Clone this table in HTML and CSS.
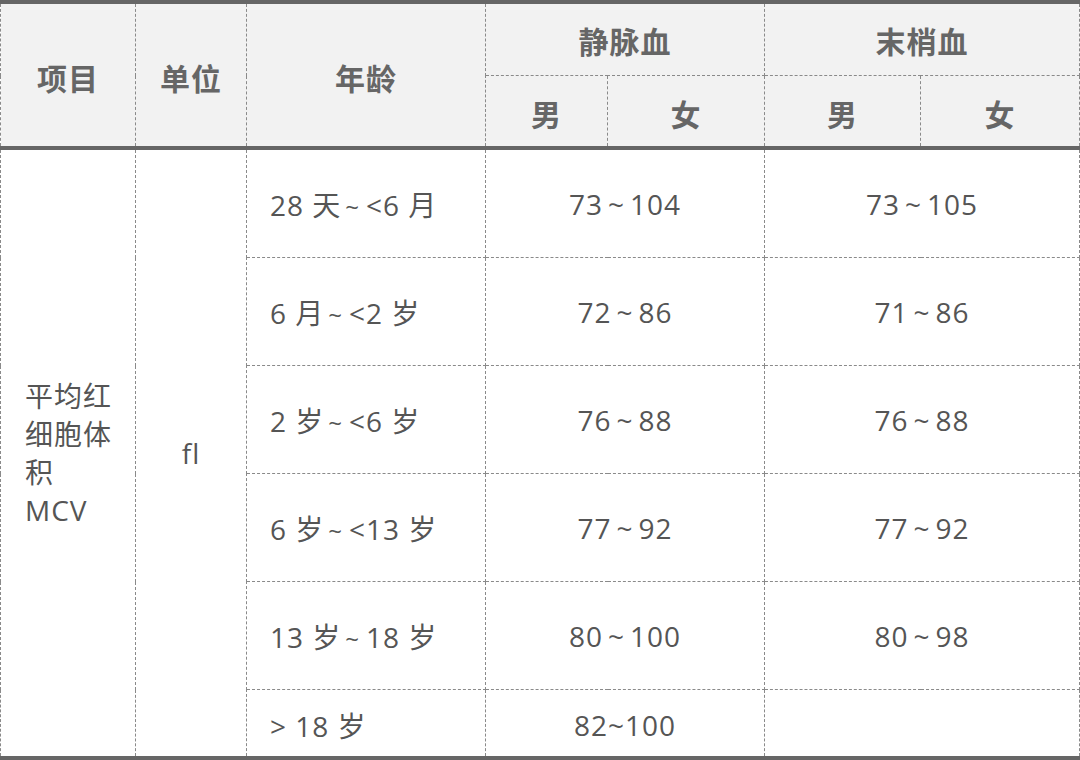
FILE: index.html
```html
<!DOCTYPE html>
<html lang="zh">
<head>
<meta charset="utf-8">
<title>MCV 参考区间</title>
<link rel="stylesheet" href="styles.css">
</head>
<body>
<table class="ref">
  <colgroup>
    <col class="c-item"><col class="c-unit"><col class="c-age">
    <col class="c-vm"><col class="c-vf"><col class="c-pm"><col class="c-pf">
  </colgroup>
  <thead>
    <tr class="h1">
      <th rowspan="2">项目</th>
      <th rowspan="2">单位</th>
      <th rowspan="2">年龄</th>
      <th colspan="2">静脉血</th>
      <th colspan="2">末梢血</th>
    </tr>
    <tr class="h2">
      <th>男</th><th>女</th><th>男</th><th>女</th>
    </tr>
  </thead>
  <tbody>
    <tr class="r">
      <td rowspan="6" class="item">平均红细胞体积 MCV</td>
      <td rowspan="6" class="unit">fl</td>
      <td class="age">28 天<span class="ta">~</span>&lt;6 月</td>
      <td colspan="2">73<span class="tl">~</span>104</td>
      <td colspan="2">73<span class="tl">~</span>105</td>
    </tr>
    <tr class="r">
      <td class="age">6 月<span class="ta">~</span>&lt;2 岁</td>
      <td colspan="2">72<span class="tl">~</span>86</td>
      <td colspan="2">71<span class="tl">~</span>86</td>
    </tr>
    <tr class="r">
      <td class="age">2 岁<span class="ta">~</span>&lt;6 岁</td>
      <td colspan="2">76<span class="tl">~</span>88</td>
      <td colspan="2">76<span class="tl">~</span>88</td>
    </tr>
    <tr class="r">
      <td class="age">6 岁<span class="ta">~</span>&lt;13 岁</td>
      <td colspan="2">77<span class="tl">~</span>92</td>
      <td colspan="2">77<span class="tl">~</span>92</td>
    </tr>
    <tr class="r">
      <td class="age">13 岁<span class="ta">~</span>18 岁</td>
      <td colspan="2">80<span class="tl">~</span>100</td>
      <td colspan="2">80<span class="tl">~</span>98</td>
    </tr>
    <tr class="last">
      <td class="age">&gt; 18 岁</td>
      <td colspan="2">82~100</td>
      <td colspan="2"></td>
    </tr>
  </tbody>
</table>
</body>
</html>
```
FILE: styles.css
```css
html, body {
  margin: 0;
  padding: 0;
  background: #ffffff;
}

.ref {
  width: 1079px;
  border-collapse: collapse;
  table-layout: fixed;
  font-family: "Open Sans", "Noto Sans CJK SC", sans-serif;
  color: #555555;
}

.c-item { width: 135px; }
.c-unit { width: 111px; }
.c-age  { width: 239px; }
.c-vm   { width: 122px; }
.c-vf   { width: 157px; }
.c-pm   { width: 156px; }
.c-pf   { width: 159px; }

.ref th,
.ref td {
  border: 1px dashed #8a8a8a;
  padding: 0;
  text-align: center;
  vertical-align: middle;
}

.ref th {
  background: #f2f2f2;
  color: #666666;
  font-family: "Noto Sans CJK SC", sans-serif;
  font-weight: 700;
  font-size: 30px;
  letter-spacing: 1px;
}

.ref .h1 th {
  border-top: 4px solid #666666;
  height: 70px;
  padding-top: 1px;
}

.ref .h2 th {
  height: 66px;
  padding-top: 4px;
  border-bottom: 4px solid #666666;
}

.ref .h1 th[rowspan] {
  border-bottom: 4px solid #666666;
  padding-top: 4px;
}

.ref td {
  font-size: 28px;
  letter-spacing: 1px;
}

.tl {
  font-size: 28px;
  margin: 0 5px 0 5px;
}

.ta {
  font-size: 24px;
  margin: 0 6px 0 4px;
}

.ref .r td {
  height: 107px;
}

.ref .last td {
  height: 62px;
  padding-top: 4px;
  border-bottom: 4px solid #666666;
}

.ref td.item {
  text-align: left;
  padding: 0 14px 0 24px;
  line-height: 38px;
  border-bottom: 4px solid #666666;
}

.ref td.unit {
  border-bottom: 4px solid #666666;
}

.ref td.age {
  text-align: left;
  padding-left: 23px;
}
```
